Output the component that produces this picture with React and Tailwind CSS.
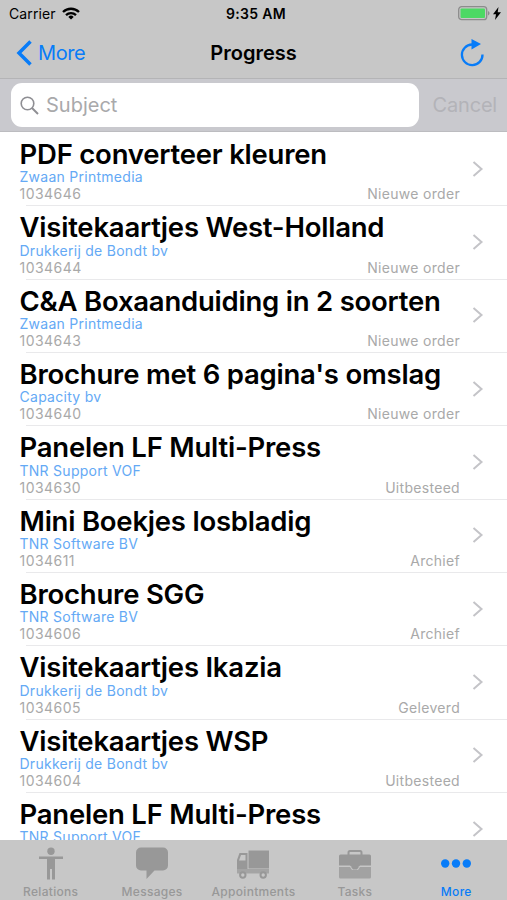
import React, { useState } from 'react';

const orders = [
  { id: '1034646', title: 'PDF converteer kleuren', company: 'Zwaan Printmedia', status: 'Nieuwe order' },
  { id: '1034644', title: 'Visitekaartjes West-Holland', company: 'Drukkerij de Bondt bv', status: 'Nieuwe order' },
  { id: '1034643', title: 'C&A Boxaanduiding in 2 soorten', company: 'Zwaan Printmedia', status: 'Nieuwe order' },
  { id: '1034640', title: "Brochure met 6 pagina's omslag", company: 'Capacity bv', status: 'Nieuwe order' },
  { id: '1034630', title: 'Panelen LF Multi-Press', company: 'TNR Support VOF', status: 'Uitbesteed' },
  { id: '1034611', title: 'Mini Boekjes losbladig', company: 'TNR Software BV', status: 'Archief' },
  { id: '1034606', title: 'Brochure SGG', company: 'TNR Software BV', status: 'Archief' },
  { id: '1034605', title: 'Visitekaartjes Ikazia', company: 'Drukkerij de Bondt bv', status: 'Geleverd' },
  { id: '1034604', title: 'Visitekaartjes WSP', company: 'Drukkerij de Bondt bv', status: 'Uitbesteed' },
  { id: '', title: 'Panelen LF Multi-Press', company: 'TNR Support VOF', status: '' },
];

const PersonIcon = () => (
  <svg width="34" height="34" viewBox="0 0 34 34" fill="currentColor">
    <circle cx="17" cy="4.200" r="3.700" />
    <path d="M5 9.500h24v2.500h-8v20.500h-3V22h-2v10.500h-3V12H5z" />
  </svg>
);

const BubbleIcon = () => (
  <svg width="34" height="34" viewBox="0 0 34 34" fill="currentColor">
    <path d="M6 .5h22a5 5 0 0 1 5 5v13a5 5 0 0 1-5 5h-8.500l-8 8.500v-8.500H6a5 5 0 0 1-5-5v-13a5 5 0 0 1 5-5z" />
  </svg>
);

const TruckIcon = () => (
  <svg width="34" height="34" viewBox="0 0 34 34" fill="currentColor">
    <path d="M12.500 3.500H33v18H12.500z" />
    <path d="M1 22v-9l2.500-7h8v16zM3 13.500h6.500V8H5z" fillRule="evenodd" />
    <path d="M1 22h32v4.500H1z" fillOpacity="0.750" />
    <circle cx="6.800" cy="28" r="2.700" fill="#c7c7c7" stroke="currentColor" strokeWidth="2" />
    <circle cx="27.200" cy="28" r="2.700" fill="#c7c7c7" stroke="currentColor" strokeWidth="2" />
  </svg>
);

const BriefcaseIcon = () => (
  <svg width="34" height="34" viewBox="0 0 34 34" fill="currentColor">
    <path d="M10.500 8V5.500a1.500 1.500 0 0 1 1.500-1.500h10a1.500 1.500 0 0 1 1.500 1.500V8" fill="none" stroke="currentColor" strokeWidth="2" />
    <path d="M2.500 7.500h29A1.500 1.500 0 0 1 33 9v9.500H22l-1 1h-8l-1-1H1V9a1.500 1.500 0 0 1 1.500-1.500z" />
    <path d="M1 20h11l2 3h6l2-3h11v10a1.500 1.500 0 0 1-1.500 1.500h-29A1.500 1.500 0 0 1 1 30z" fillOpacity="0.800" />
    <path d="M13.500 19h7v1.500L19 22.500h-4l-1.500-2z" />
  </svg>
);

const DotsIcon = () => (
  <svg width="34" height="34" viewBox="0 0 34 34" fill="currentColor">
    <circle cx="6.200" cy="16.500" r="4.200" />
    <circle cx="17" cy="16.500" r="4.200" />
    <circle cx="27.800" cy="16.500" r="4.200" />
  </svg>
);

const tabs = [
  { label: 'Relations', icon: PersonIcon },
  { label: 'Messages', icon: BubbleIcon },
  { label: 'Appointments', icon: TruckIcon },
  { label: 'Tasks', icon: BriefcaseIcon },
  { label: 'More', icon: DotsIcon },
];

const StatusBar = () => (
  <div className="grid grid-cols-3 items-center h-[27px] pl-[9px] pr-[6px] text-[14px]">
    <div className="flex items-center gap-[6px] tracking-[0.100px]">
      Carrier
      <svg width="18" height="13" viewBox="0 0 18 13" fill="none" stroke="#000" strokeWidth="2.300">
        <path d="M1 5a11.500 11.500 0 0 1 16 0" />
        <path d="M4 8.200a7.200 7.200 0 0 1 10 0" />
        <path d="M9 12.500L6.300 9.900a3.900 3.900 0 0 1 5.400 0z" fill="#000" stroke="none" />
      </svg>
    </div>
    <div className="pl-[2px] text-center font-semibold tracking-[0.300px]">9:35 AM</div>
    <div className="flex justify-end items-center gap-[3px]">
      <svg width="32" height="15" viewBox="0 0 32 15">
        <rect x="0.700" y="0.700" width="28" height="13" rx="3" fill="none" stroke="#8c8c8c" strokeWidth="1.300" />
        <rect x="2.500" y="2.500" width="24.500" height="9.500" rx="1" fill="#4cd964" />
        <path d="M30 5v4.500c2-.8 2-3.700 0-4.500z" fill="#8c8c8c" />
      </svg>
      <svg width="8" height="13" viewBox="0 0 8 13">
        <path d="M5.500 0L0 7.200h3L2 13l6-7.700H4.700z" />
      </svg>
    </div>
  </div>
);

const OrderRow = ({ order }) => (
  <li className="flex h-[73.330px] shrink-0 pl-[19.500px]">
    <div className="flex-1 min-w-0 pt-2">
      <h2 className="text-[27.500px] leading-[28.300px] font-semibold tracking-[-0.220px] whitespace-nowrap">{order.title}</h2>
      <p className="text-[14px] leading-[17px] tracking-[0.270px] text-[#64a9f5]">{order.company}</p>
      <div className="flex justify-between pr-[6px] text-[14px] leading-[17px] text-[#a9a9a9]">
        <span className="tracking-[0.450px]">{order.id}</span>
        <span className="tracking-[0.300px]">{order.status}</span>
      </div>
    </div>
    <div className="flex items-center w-[41px] pl-[6px]">
      <svg width="12" height="18" viewBox="0 0 12 18" fill="none" stroke="#c4c4c8" strokeWidth="2">
        <path d="M1.500 2l8 7-8 7" />
      </svg>
    </div>
  </li>
);

const App = () => {
  const [subject, setSubject] = useState('');
  const [activeTab, setActiveTab] = useState('More');

  return (
    <div className="flex flex-col w-[507px] h-[900px] overflow-hidden bg-white text-black font-['Inter',sans-serif]">
      <header className="shrink-0 h-[79px] bg-[#c7c7c7] border-b border-[#b4b4b6]">
        <StatusBar />
        <nav className="grid grid-cols-3 items-center h-[51px] px-4">
          <button className="flex items-center gap-[6px] text-[20px] tracking-[-0.400px] text-[#087cf8]">
            <svg width="16" height="26" viewBox="0 0 16 26" fill="none" stroke="currentColor" strokeWidth="3.500">
              <path d="M14.500 1.500L3 13l11.500 11.500" />
            </svg>
            More
          </button>
          <h1 className="text-center text-[20px] font-semibold">Progress</h1>
          <button className="justify-self-end pr-[6px] text-[#087cf8]">
            <svg width="26" height="28" viewBox="0 0 26 28" fill="none" stroke="currentColor" strokeWidth="2.300">
              <path d="M13 5.500A10.300 10.300 0 1 0 23.500 15.500" />
              <path d="M12.500 0l9.500 5-9.500 5.500z" fill="currentColor" stroke="none" />
            </svg>
          </button>
        </nav>
      </header>

      <div className="shrink-0 flex items-center h-[53px] pl-[11px] pr-[10px] bg-[#c9c9ce] border-b border-[#bcbcc0]">
        <label className="flex items-center gap-[7px] w-[408px] h-[44px] pl-[9px] rounded-[11px] bg-white">
          <svg width="19" height="19" viewBox="0 0 19 19" fill="none" stroke="#8e8e93" strokeWidth="1.600">
            <circle cx="7.500" cy="7.500" r="6.300" />
            <path d="M12 12l6 6" strokeWidth="2" />
          </svg>
          <input
            type="text"
            placeholder="Subject"
            value={subject}
            onChange={e => setSubject(e.target.value)}
            className="flex-1 text-[20px] outline-none placeholder:text-[#a9a9ab]"
          />
        </label>
        <button className="ml-auto text-[20px] tracking-[-0.200px] text-[#b3b3b8]">Cancel</button>
      </div>

      <ul className="flex-1 min-h-0 overflow-hidden flex flex-col">
        {orders.map((order, i) => (
          <React.Fragment key={i}>
            {i > 0 && <li className="shrink-0 h-px -mb-px ml-[26px] bg-[#e9e9eb]" />}
            <OrderRow order={order} />
          </React.Fragment>
        ))}
      </ul>

      <footer className="shrink-0 grid grid-cols-5 h-[60px] bg-[#c7c7c7]">
        {tabs.map(({ label, icon: Icon }) => (
          <button
            key={label}
            onClick={() => setActiveTab(label)}
            className={`flex flex-col items-center pt-[7px] text-[12px] leading-[15px] font-medium tracking-[0.300px] ${
              activeTab === label ? 'text-[#087cf8]' : 'text-[#989898]'
            }`}
          >
            <Icon />
            <span className="mt-[3px]">{label}</span>
          </button>
        ))}
      </footer>
    </div>
  );
};

export default App;
